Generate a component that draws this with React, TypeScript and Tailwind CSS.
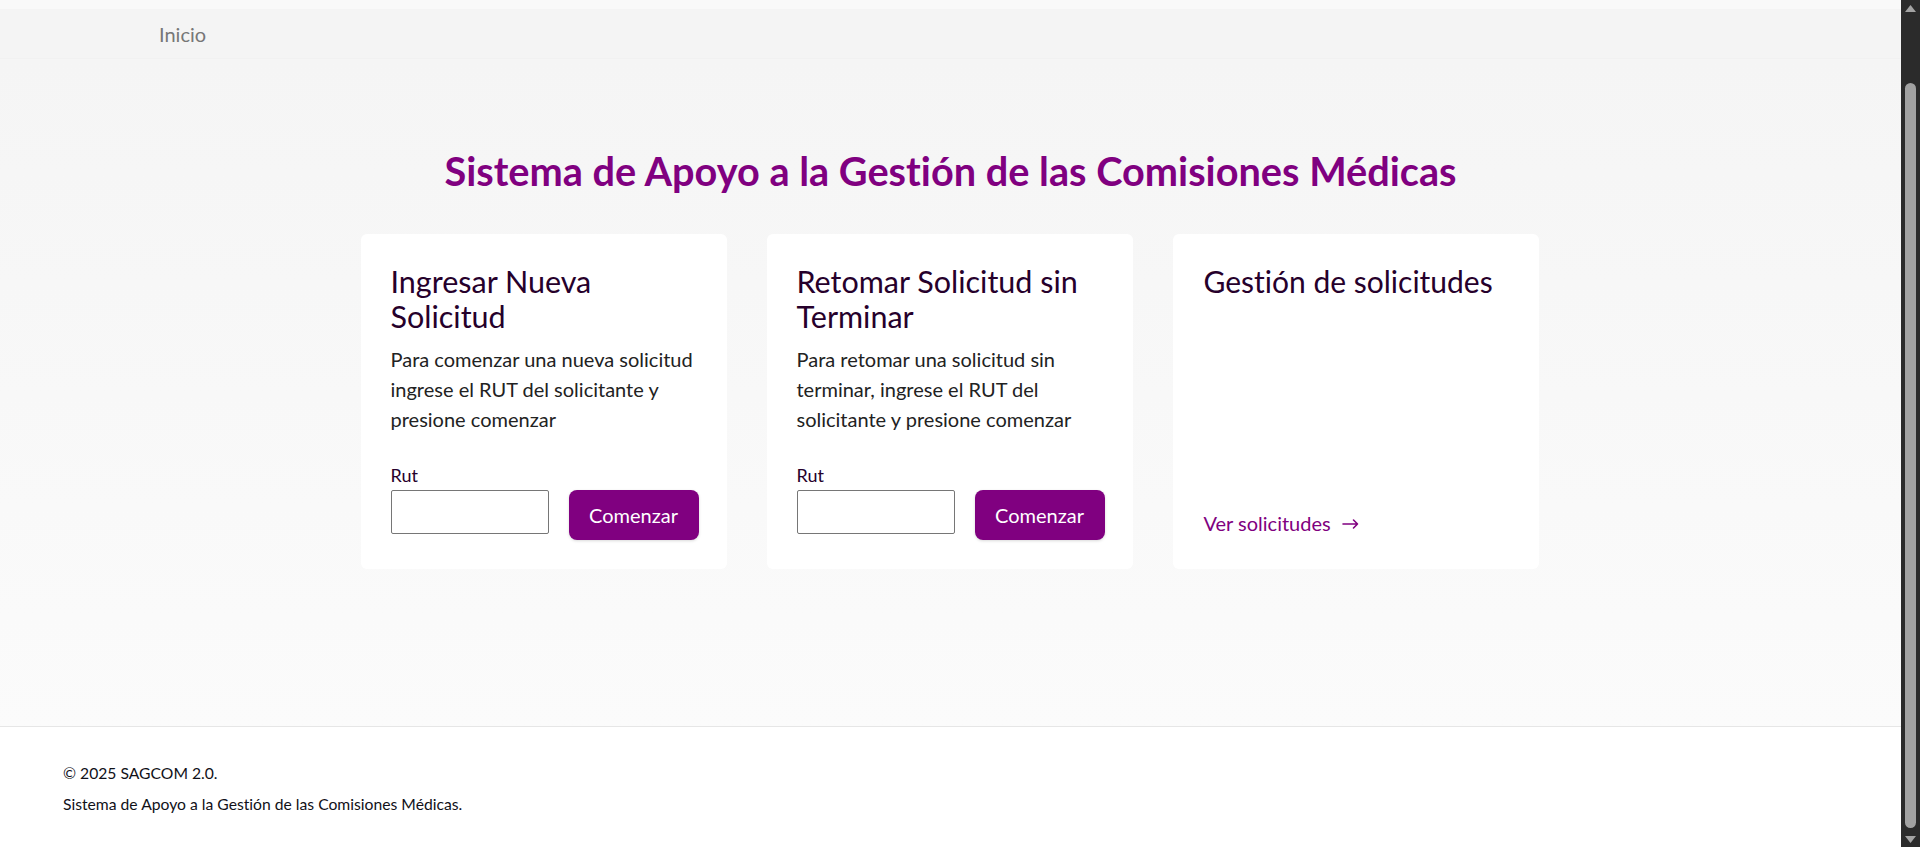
import React from "react";

function Arrow() {
  return (
    <svg width="17" height="12" viewBox="0 0 17 12" fill="none" className="ml-[11px] mt-[2px]">
      <path d="M1 6H15.5M11.5 2L15.5 6L11.5 10" stroke="#800080" strokeWidth="1.6" strokeLinecap="round" strokeLinejoin="round" />
    </svg>
  );
}

function RutCard({ title, text }: { title: React.ReactNode; text: React.ReactNode }) {
  return (
    <div className="bg-white rounded-[6px] pt-[30px] pb-[29px] pl-[30px] pr-[24px] flex flex-col">
      <h2 className="text-[30.5px] leading-[35px] text-[#26002b] font-normal">{title}</h2>
      <p className="mt-[10px] text-[20px] leading-[30px] text-[#222222]">{text}</p>
      <label className="mt-[29px] text-[18px] leading-[24px] text-[#26002b]">Rut</label>
      <div className="mt-[3px] flex items-start gap-[20px]">
        <input className="w-[158px] h-[44px] bg-white border border-[#767676] rounded-[2px] outline-none px-2 text-[16px]" />
        <button className="w-[130px] h-[50px] rounded-[8px] bg-[#800080] text-white text-[20px] shadow-[0_1px_3px_rgba(0,0,0,0.15)]">
          Comenzar
        </button>
      </div>
    </div>
  );
}

export default function App() {
  return (
    <div className="h-[847px] w-full flex overflow-hidden [font-variant-ligatures:none]" style={{ fontFamily: "Lato, 'Noto Sans', sans-serif" }}>
      <div className="flex-1 flex flex-col min-w-0">
        <div className="h-[9px] bg-[#f9f9f9]" />
        <nav className="h-[50px] bg-[#f4f4f4] pl-[159px] flex items-center border-b border-[#f1f1f1]">
          <span className="text-[20px] leading-[30px] text-[#777777]">Inicio</span>
        </nav>
        <main className="flex-1 bg-gradient-to-b from-[#f5f5f5] to-[#fbfbfb] flex flex-col items-center pt-[88px]">
          <h1 className="text-[39.7px] leading-[48px] font-bold text-[#800080]">
            Sistema de Apoyo a la Gestión de las Comisiones Médicas
          </h1>
          <div className="mt-[39px] mr-[2px] w-[1178px] grid grid-cols-3 gap-[40px]">
            <RutCard
              title={<>Ingresar Nueva<br />Solicitud</>}
              text={<>Para comenzar una nueva solicitud<br />ingrese el RUT del solicitante y<br />presione comenzar</>}
            />
            <RutCard
              title={<>Retomar Solicitud sin<br />Terminar</>}
              text={<>Para retomar una solicitud sin<br />terminar, ingrese el RUT del<br />solicitante y presione comenzar</>}
            />
            <div className="bg-white rounded-[6px] pt-[30px] pb-[31px] pl-[31px] pr-[24px] flex flex-col justify-between">
              <h2 className="text-[30px] leading-[35px] text-[#26002b] font-normal">Gestión de solicitudes</h2>
              <a className="flex items-center text-[20px] leading-[30px] text-[#800080] cursor-pointer">
                Ver solicitudes
                <Arrow />
              </a>
            </div>
          </div>
        </main>
        <footer className="h-[121px] bg-white border-t border-[#e6e6e6] pl-[63px] pt-[34px] flex flex-col gap-[7px] text-[15.7px] leading-[24px] text-[#111118]">
          <p>© 2025 SAGCOM 2.0.</p>
          <p>Sistema de Apoyo a la Gestión de las Comisiones Médicas.</p>
        </footer>
      </div>
      <div className="w-[19px] bg-[#2b2b2b] flex flex-col items-center">
        <div className="h-[16px] flex items-center justify-center">
          <svg width="11" height="7" viewBox="0 0 11 7"><path d="M5.5 0L11 7H0Z" fill="#a3a3a3" /></svg>
        </div>
        <div className="flex-1 w-full flex flex-col px-[4px] pt-[67px] pb-[3px]">
          <div className="flex-1 rounded-full bg-[#a2a2a2]" />
        </div>
        <div className="h-[16px] flex items-center justify-center">
          <svg width="11" height="7" viewBox="0 0 11 7"><path d="M0 0H11L5.5 7Z" fill="#a3a3a3" /></svg>
        </div>
      </div>
    </div>
  );
}
